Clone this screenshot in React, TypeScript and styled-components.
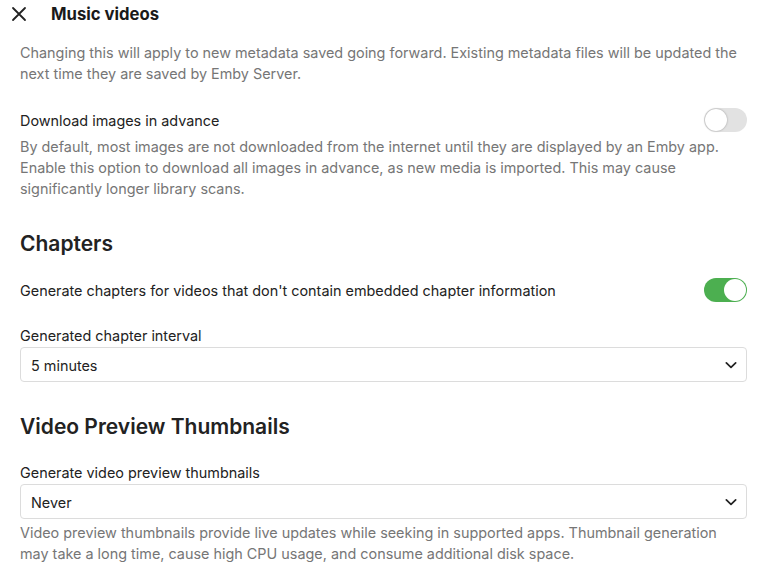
import React from "react";
import styled, { createGlobalStyle } from "styled-components";

const Global = createGlobalStyle`
  html, body { margin: 0; padding: 0; background: #fff; }
  body { font-family: Inter, "Noto Sans", sans-serif; color: #222; overflow: hidden; }
  * { box-sizing: border-box; }
`;

const Page = styled.div`
  width: 782px;
  height: 588px;
  display: flex;
  flex-direction: column;
  background: #fff;
`;

const Header = styled.div`
  height: 47px;
  flex: none;
  display: flex;
  align-items: flex-start;
  padding: 4px 0 0 11px;
  gap: 24px;
`;

const CloseButton = styled.button`
  width: 16px;
  height: 20px;
  padding: 0;
  border: none;
  background: none;
  display: flex;
  align-items: center;
  justify-content: center;
  color: #222;
`;

const Title = styled.h1`
  margin: 0;
  font-size: 16.7px;
  line-height: 20px;
  font-weight: 700;
  color: #1a1a1a;
`;

const Scroller = styled.div`
  flex: 1;
  overflow: hidden;
  padding: 0 35px 0 20px;
  display: flex;
  flex-direction: column;
`;

const Description = styled.p<{ $top?: number }>`
  margin: ${(p) => p.$top ?? 0}px 0 0;
  font-size: 14.4px;
  line-height: 21px;
  color: #767676;
`;

const ToggleRow = styled.div<{ $top: number }>`
  margin-top: ${(p) => p.$top}px;
  height: 26px;
  display: flex;
  align-items: center;
  justify-content: space-between;
`;

const Label = styled.div<{ $top?: number }>`
  margin-top: ${(p) => p.$top ?? 0}px;
  font-size: 14.4px;
  line-height: 21px;
  color: #222;
`;

const Heading = styled.h2<{ $top: number }>`
  margin: ${(p) => p.$top}px 0 0;
  font-size: 21px;
  line-height: 28px;
  font-weight: 600;
  color: #222;
`;

const Track = styled.div<{ $on: boolean }>`
  position: relative;
  width: 43px;
  height: 24px;
  border-radius: 12px;
  background: ${(p) => (p.$on ? "#4caf50" : "#e2e2e2")};
  flex: none;
`;

const Knob = styled.div<{ $on: boolean }>`
  position: absolute;
  top: 1px;
  left: ${(p) => (p.$on ? "20px" : "1px")};
  width: 22px;
  height: 22px;
  border-radius: 50%;
  background: #fff;
  box-shadow: ${(p) => (p.$on ? "none" : "0 0 2px rgba(0,0,0,0.35)")};
`;

const SelectBox = styled.div<{ $top: number }>`
  margin-top: ${(p) => p.$top}px;
  height: 35px;
  border: 1px solid #dcdcdc;
  border-radius: 4px;
  display: flex;
  align-items: center;
  justify-content: space-between;
  padding: 1px 8px 0 10px;
  font-size: 14.4px;
  color: #222;
`;

const Toggle = ({ on }: { on: boolean }) => (
  <Track $on={on}>
    <Knob $on={on} />
  </Track>
);

const Chevron = () => (
  <svg width="14" height="14" viewBox="0 0 24 24" fill="none" stroke="#222" strokeWidth="3" strokeLinecap="round" strokeLinejoin="round">
    <path d="M4 8.5l8 7.5 8-7.5" />
  </svg>
);

const Select = ({ value, top }: { value: string; top: number }) => (
  <SelectBox $top={top}>
    <span>{value}</span>
    <Chevron />
  </SelectBox>
);

export default function App() {
  return (
    <Page>
      <Global />
      <Header>
        <CloseButton aria-label="Close">
          <svg width="16" height="16" viewBox="0 0 16 16" fill="none" stroke="#222" strokeWidth="1.8" strokeLinecap="round">
            <path d="M2 2l12 12M14 2L2 14" />
          </svg>
        </CloseButton>
        <Title>Music videos</Title>
      </Header>
      <Scroller>
        <Description $top={-5}>
          Changing this will apply to new metadata saved going forward. Existing metadata files will be updated the next time they are saved by Emby Server.
        </Description>
        <ToggleRow $top={23}>
          <Label>Download images in advance</Label>
          <Toggle on={false} />
        </ToggleRow>
        <Description $top={3}>
          By default, most images are not downloaded from the internet until they are displayed by an Emby app. Enable this option to download all images in advance, as new media is imported. This may cause significantly longer library scans.
        </Description>
        <Heading $top={31}>Chapters</Heading>
        <ToggleRow $top={19}>
          <Label>Generate chapters for videos that don't contain embedded chapter information</Label>
          <Toggle on={true} />
        </ToggleRow>
        <Label $top={22}>Generated chapter interval</Label>
        <Select value="5 minutes" top={1} />
        <Heading $top={31}>Video Preview Thumbnails</Heading>
        <Label $top={21}>Generate video preview thumbnails</Label>
        <Select value="Never" top={1} />
        <Description $top={3}>
          Video preview thumbnails provide live updates while seeking in supported apps. Thumbnail generation may take a long time, cause high CPU usage, and consume additional disk space.
        </Description>
      </Scroller>
    </Page>
  );
}
